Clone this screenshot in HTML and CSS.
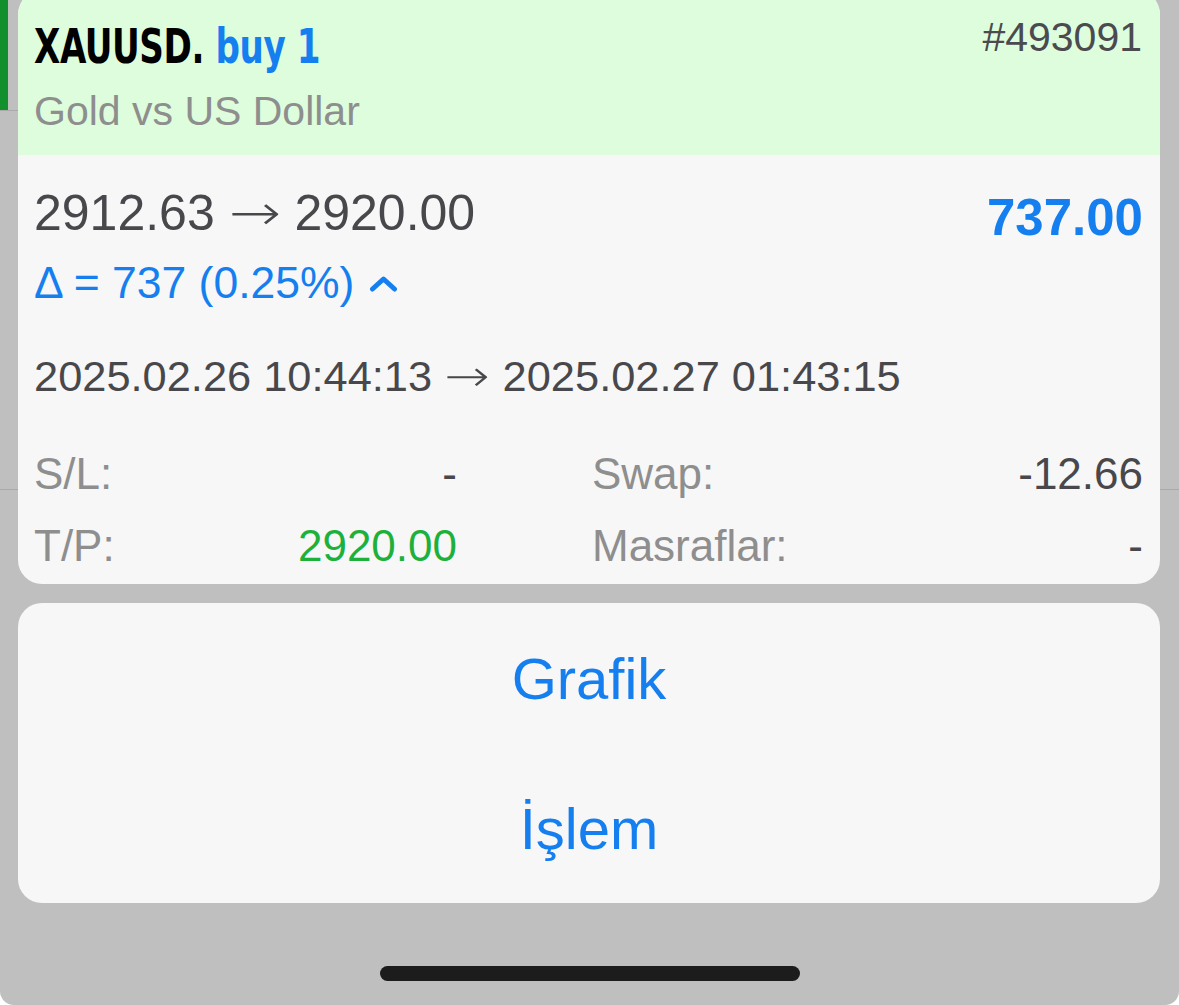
FILE: index.html
```html
<!DOCTYPE html>
<html lang="tr">
<head>
<meta charset="utf-8">
<title>XAUUSD. buy 1</title>
<link rel="stylesheet" href="styles.css">
</head>
<body>
<div class="screen">
  <section class="card position">
    <header class="pos-head">
      <div class="head-row">
        <div class="title"><span class="sym">XAUUSD.</span> <span class="side">buy 1</span></div>
        <div class="ticket">#493091</div>
      </div>
      <div class="desc">Gold vs US Dollar</div>
    </header>
    <div class="pos-body">
      <div class="price-row">
        <div class="prices">2912.63 <span class="arrow">→</span> 2920.00</div>
        <div class="profit">737.00</div>
      </div>
      <div class="delta">Δ = 737 (0.25%)
        <svg class="chev" width="30" height="18" viewBox="0 0 30 18"><path d="M3.5 14 L14.5 4 L25.5 14" fill="none" stroke="#157ff0" stroke-width="5" stroke-linecap="round" stroke-linejoin="round"/></svg>
      </div>
      <div class="dates">2025.02.26 10:44:13 <span class="arrow">→</span> 2025.02.27 01:43:15</div>
      <div class="stats">
        <div class="stat"><span class="lbl">S/L:</span><span class="val">-</span></div>
        <div class="stat"><span class="lbl">Swap:</span><span class="val">-12.66</span></div>
        <div class="stat"><span class="lbl">T/P:</span><span class="val green">2920.00</span></div>
        <div class="stat"><span class="lbl">Masraflar:</span><span class="val">-</span></div>
      </div>
    </div>
  </section>
  <section class="card actions">
    <div class="action">Grafik</div>
    <div class="action">İşlem</div>
  </section>
  <div class="home-bar"></div>
</div>
</body>
</html>
```

FILE: styles.css
```css
html, body {
  margin: 0;
  padding: 0;
  background: #ffffff;
}
body {
  font-family: "Liberation Sans", Arial, sans-serif;
}
.screen {
  width: 1179px;
  height: 1005px;
  overflow: hidden;
  box-sizing: border-box;
  padding: 0 19px 0 18px;
  display: flex;
  flex-direction: column;
  border-radius: 0 0 14px 14px;
  background-color: #bfbfbf;
  background-image:
    linear-gradient(#13902e, #13902e),
    linear-gradient(#a9a9a9, #a9a9a9),
    linear-gradient(#a9a9a9, #a9a9a9),
    linear-gradient(#a9a9a9, #a9a9a9);
  background-size: 8px 110px, 18px 1px, 18px 1px, 19px 1px;
  background-position: 0 0, 0 110px, 0 489px, right 0 top 489px;
  background-repeat: no-repeat;
}
.card {
  background: #f7f7f7;
  border-radius: 24px;
  overflow: hidden;
}
.position {
  margin-top: -11px;
  border-radius: 26px 26px 24px 24px;
}
.pos-head {
  background: #ddfddd;
  padding: 28px 18px 23px 16px;
}
.head-row {
  display: flex;
  justify-content: space-between;
  align-items: flex-start;
}
.title {
  font-family: "Liberation Sans Narrow", "DejaVu Sans Condensed", "Liberation Sans", sans-serif;
  font-weight: bold;
  font-size: 48px;
  line-height: 47px;
  margin-top: 6px;
  color: #000;
  letter-spacing: -0.5px;
  white-space: nowrap;
  transform: scaleX(0.79);
  transform-origin: left center;
}
.side {
  color: #157ff0;
}
.ticket {
  font-size: 41px;
  line-height: 41px;
  color: #4a4a4f;
}
.desc {
  margin-top: 21px;
  font-size: 41px;
  line-height: 41px;
  color: #8e8e8e;
}
.pos-body {
  padding: 33px 17px 16px 16px;
}
.price-row {
  display: flex;
  justify-content: space-between;
  align-items: flex-start;
}
.prices {
  font-size: 50px;
  line-height: 50px;
  color: #48484c;
}
.arrow {
  display: inline-block;
  font-family: "DejaVu Sans", sans-serif;
  font-weight: 300;
  margin: 0 5px;
  transform: scaleX(1.25);
}
.profit {
  font-size: 51px;
  line-height: 51px;
  font-weight: bold;
  color: #157ff0;
  margin-top: 4px;
}
.delta {
  margin-top: 18px;
  font-size: 44.5px;
  line-height: 44px;
  color: #157ff0;
  display: flex;
  align-items: center;
  gap: 15px;
}
.chev {
  margin-top: 2px;
}
.dates {
  margin-top: 50px;
  font-size: 43.4px;
  line-height: 43px;
  color: #48484c;
}
.stats {
  margin-top: 54px;
  display: grid;
  grid-template-columns: 423px 1fr;
  column-gap: 135px;
  row-gap: 28px;
}
.stat {
  display: flex;
  justify-content: space-between;
  font-size: 44px;
  line-height: 44px;
}
.lbl {
  color: #8e8e8e;
}
.val {
  color: #48484c;
}
.val.green {
  color: #1db03b;
}
.actions {
  margin-top: 19px;
  display: flex;
  flex-direction: column;
}
.action {
  height: 150px;
  display: flex;
  align-items: center;
  justify-content: center;
  font-size: 58px;
  color: #157ff0;
}
.home-bar {
  align-self: center;
  width: 420px;
  height: 15px;
  margin-top: 63px;
  margin-left: 1px;
  border-radius: 8px;
  background: #1c1c1c;
}
```
